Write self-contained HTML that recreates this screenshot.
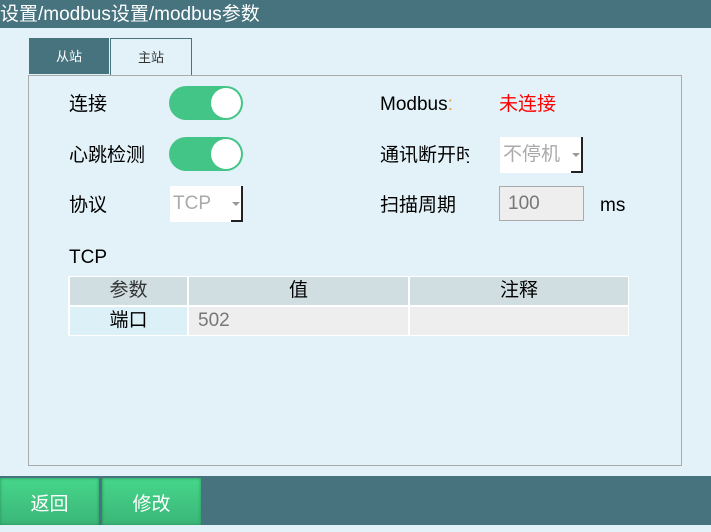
<!DOCTYPE html>
<html><head><meta charset="utf-8"><style>
*{margin:0;padding:0;box-sizing:border-box}
body{width:711px;height:525px;position:relative;background:#e3f2f8;font-family:"Liberation Sans","Noto Sans CJK SC",sans-serif;overflow:hidden;color:#000}
.a{position:absolute}
.title{left:0;top:0;width:711px;height:28px;background:#47737f;color:#fff;font-size:19px;line-height:30px;padding-left:0}
.lbl{font-size:19px;line-height:22px}
.tog{width:74px;height:34px;border-radius:17px;background:#42c586}
.tog::after{content:"";position:absolute;right:2px;top:2px;width:30px;height:30px;border-radius:50%;background:#fff}
.combo{background:#fff;color:#aaa;font-size:19px;line-height:36px;padding-left:3px;height:36px}
.combo .arr{position:absolute;right:0;top:0;width:12px;height:36px;border-right:2px solid #222;border-bottom:2px solid #222}
.combo .arr::after{content:"";position:absolute;left:1px;top:16px;border-left:4px solid transparent;border-right:4px solid transparent;border-top:4px solid #999}
.cell{font-size:19px;line-height:28px;height:28px;text-align:center}
.btn{top:478px;height:47px;width:99px;background:linear-gradient(#46d68a,#3bb678);color:#fff;font-size:19px;line-height:54px;text-align:center;box-shadow:inset 0 0 3px #2a8d5a}
</style></head><body>
<div class="a title">设置/modbus设置/modbus参数</div>
<div class="a" style="left:29px;top:38px;width:80px;height:36px;background:#47737f;color:#fff;font-size:13px;line-height:38px;text-align:center">从站</div>
<div class="a" style="left:110px;top:38px;width:82px;height:37px;border:1px solid #47737f;border-bottom:none;color:#333;font-size:13px;line-height:38px;text-align:center">主站</div>
<div class="a" style="left:28px;top:75px;width:654px;height:391px;border:1px solid #aaa"></div>
<div class="a lbl" style="left:69px;top:94px">连接</div>
<div class="a tog" style="left:169px;top:86px"></div>
<div class="a lbl" style="left:69px;top:145px">心跳检测</div>
<div class="a tog" style="left:169px;top:137px"></div>
<div class="a lbl" style="left:69px;top:195px">协议</div>
<div class="a combo" style="left:170px;top:186px;width:73px">TCP<span class="arr"></span></div>
<div class="a lbl" style="left:380px;top:94px">Modbus<span style="color:#e8a040">:</span></div>
<div class="a lbl" style="left:499px;top:94px;color:#f00">未连接</div>
<div class="a lbl" style="left:380px;top:145px;width:89px;overflow:hidden;white-space:nowrap">通讯断开时</div>
<div class="a combo" style="left:500px;top:137px;width:83px">不停机<span class="arr"></span></div>
<div class="a lbl" style="left:380px;top:195px">扫描周期</div>
<div class="a" style="left:499px;top:186px;width:85px;height:35px;border:1px solid #aaa;background:#eee;color:#777;font-size:19px;line-height:33px;padding-left:8px">100</div>
<div class="a lbl" style="left:600px;top:195px">ms</div>
<div class="a lbl" style="left:69px;top:247px">TCP</div>
<div class="a" style="left:68px;top:276px;width:561px;height:60px;background:#fff"></div>
<div class="a cell" style="left:70px;top:277px;width:117px;background:#d0dde1;color:#333">参数</div>
<div class="a cell" style="left:189px;top:277px;width:219px;background:#d0dde1">值</div>
<div class="a cell" style="left:410px;top:277px;width:218px;background:#d0dde1">注释</div>
<div class="a cell" style="left:70px;top:307px;width:117px;background:#dbf0f7">端口</div>
<div class="a cell" style="left:189px;top:307px;width:219px;background:#eee;color:#777;text-align:left;padding-left:9px">502</div>
<div class="a cell" style="left:410px;top:307px;width:218px;background:#eee"></div>
<div class="a" style="left:0;top:476px;width:711px;height:49px;background:#47737f"></div>
<div class="a btn" style="left:0">返回</div>
<div class="a btn" style="left:102px">修改</div>
</body></html>
